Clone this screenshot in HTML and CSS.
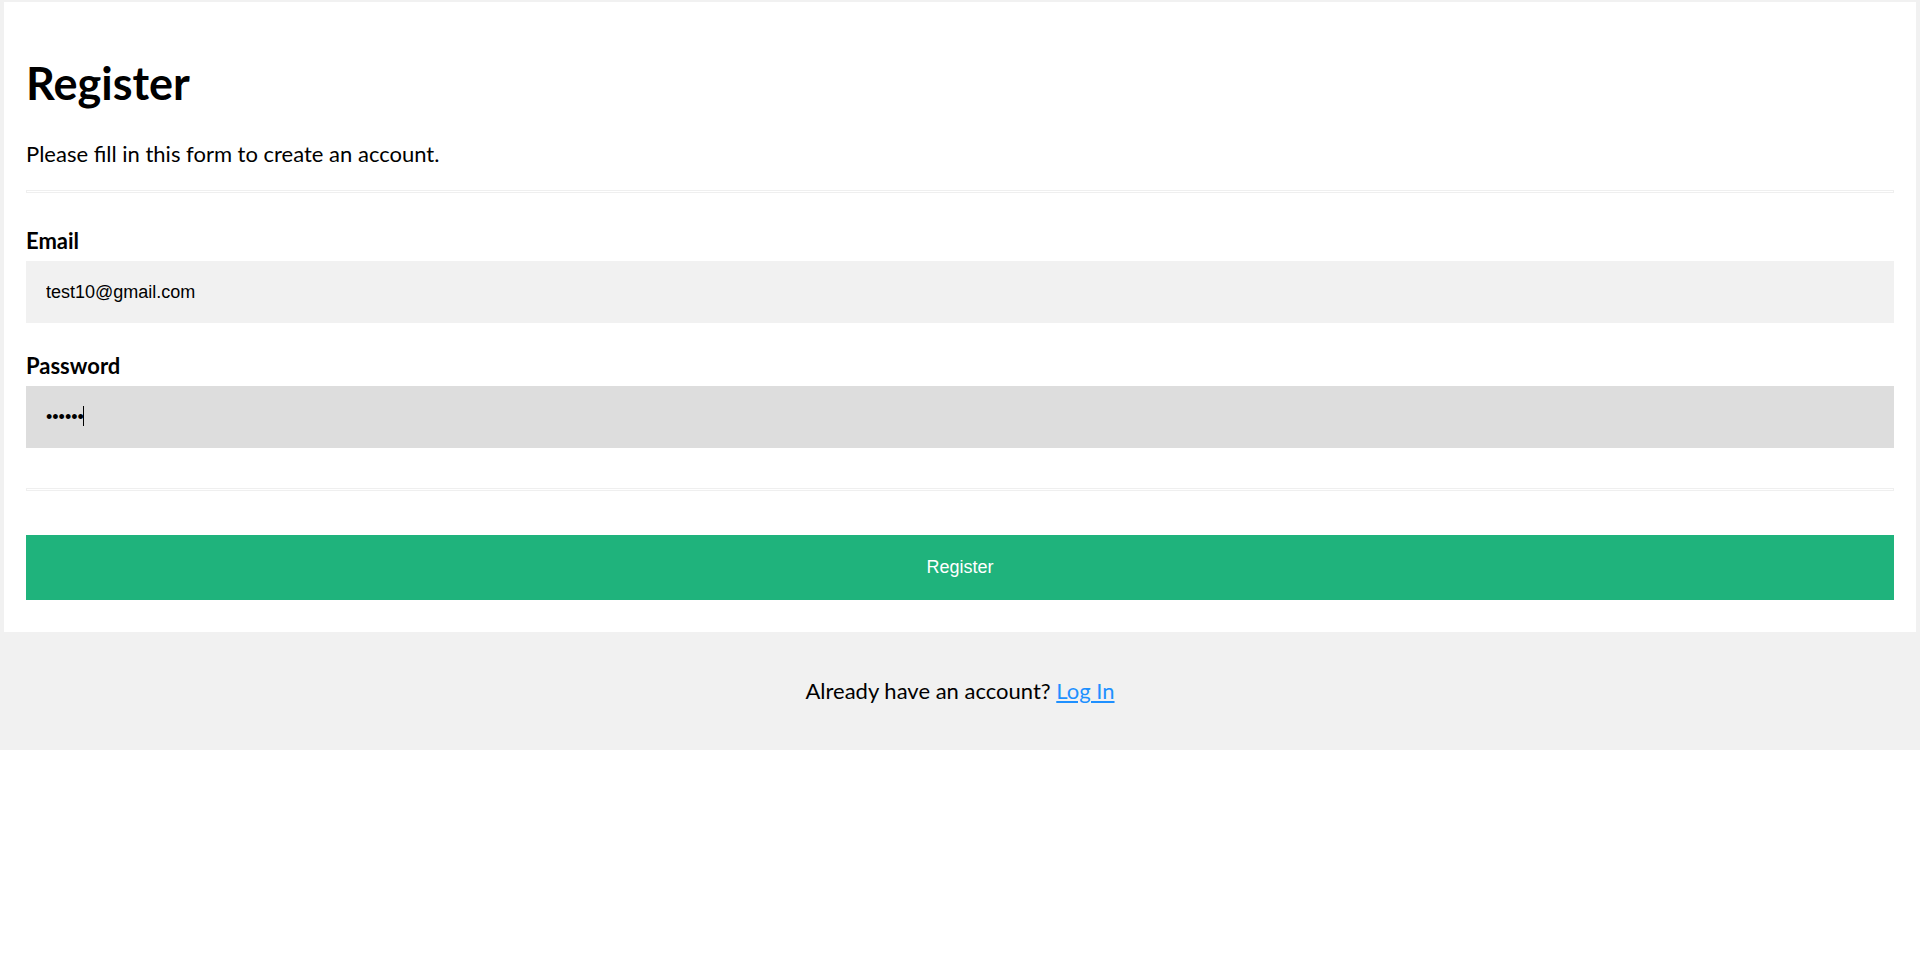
FILE: index.html
```html
<!DOCTYPE html>
<html lang="en">
<head>
  <meta charset="UTF-8">
  <meta name="viewport" content="width=device-width, initial-scale=1.0">
  <title>Register</title>
  <link rel="stylesheet" href="styles.css">
</head>
<body>

<div class="frame">
  <form class="container" action="#">
    <h1>Register</h1>
    <p class="intro">Please fill in this form to create an account.</p>
    <hr>

    <label for="email">Email</label>
    <input type="text" id="email" name="email" value="test10@gmail.com">

    <label for="psw">Password</label>
    <div class="field">
      <input type="password" id="psw" name="psw" value="123456" class="active">
      <span class="caret"></span>
    </div>
    <hr>

    <button type="submit" class="registerbtn">Register</button>
  </form>
</div>

<div class="signin">
  <p>Already have an account? <a href="#">Log In</a></p>
</div>

</body>
</html>
```

FILE: styles.css
```css
body {
  margin: 0;
  font-family: 'Lato', 'Liberation Sans', sans-serif;
  background-color: #fff;
  color: #000;
}
.frame {
  background-color: #f1f1f1;
  padding: 2px 4px 0 4px;
}
.container {
  display: flex;
  flex-direction: column;
  padding: 20px 22px 32px 22px;
  background-color: #fff;
}
h1 {
  margin: 34px 0 0 0;
  font-size: 45px;
  line-height: 54px;
  font-weight: 700;
}
.intro {
  margin: 31px 0 0 0;
  font-size: 22px;
  line-height: 26px;
}
hr {
  margin: 23px 0 0 0;
  border: 1px solid #efefef;
  box-sizing: border-box;
  height: 3px;
}
label {
  display: block;
  margin: 35px 0 7px 0;
  font-size: 22px;
  line-height: 26px;
  font-weight: 700;
}
input + label {
  margin-top: 30px;
}
input[type=text], input[type=password] {
  width: 100%;
  height: 62px;
  box-sizing: border-box;
  padding: 0 20px;
  margin: 0;
  border: none;
  outline: none;
  background: #f1f1f1;
  font-family: 'Liberation Sans', Arial, sans-serif;
  font-size: 18px;
  color: #000;
}
input.active {
  background-color: #ddd;
}
.field {
  position: relative;
}
/* fake text cursor after the password dots */
.caret {
  position: absolute;
  left: 57px;
  top: 20px;
  width: 1px;
  height: 20px;
  background: #000;
}
.field + hr {
  margin-top: 40px;
}
.registerbtn {
  margin-top: 44px;
  height: 65px;
  border: none;
  background-color: #1fb37c;
  color: #fff;
  font-family: 'Liberation Sans', Arial, sans-serif;
  font-size: 18px;
  cursor: pointer;
}
.signin {
  display: flex;
  align-items: center;
  justify-content: center;
  height: 118px;
  background-color: #f1f1f1;
}
.signin p {
  margin: 0;
  font-size: 22px;
  line-height: 26px;
}
a {
  color: dodgerblue;
}
```
